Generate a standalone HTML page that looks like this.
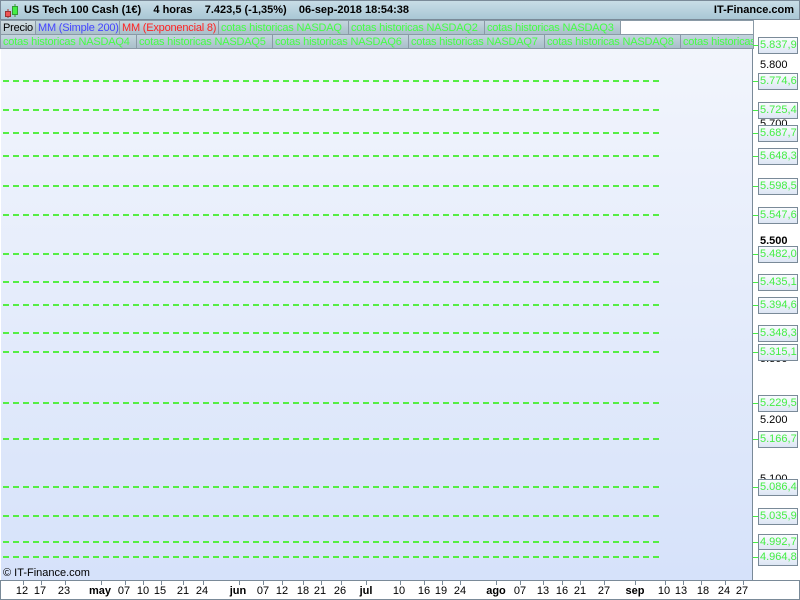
<!DOCTYPE html><html><head><style>
*{margin:0;padding:0;box-sizing:border-box}
body{width:800px;height:600px;overflow:hidden;background:#fff;font-family:"Liberation Sans",sans-serif;position:relative}
.hdr{position:absolute;left:0;top:0;width:800px;height:20px;background:linear-gradient(#c8dde6,#a9c7d5);border:1px solid #7a8a98;font-size:11px;font-weight:bold;line-height:19px}
.tab{position:absolute;height:15px;font-size:11px;letter-spacing:-0.2px;line-height:14px;padding-left:2px;border:1px solid #8a9aa6;background:linear-gradient(#c4d6de,#a9bfca);color:#44ff44;white-space:nowrap;overflow:hidden}
.plot{position:absolute;left:1px;top:49px;width:752px;height:531px;background:linear-gradient(#f2f5fc,#d6e2fa);border-right:1px solid #7a8a98}
.dl{position:absolute;left:2px;width:656px;height:2px;background:repeating-linear-gradient(90deg,#55ee44 0 6px,transparent 6px 10px)}
.lb{position:absolute;left:758px;width:40px;height:17px;border:1px solid #7a8a98;background:linear-gradient(#fafcff,#dde6f4);color:#44ee44;font-size:11px;line-height:15px;padding-left:1px;white-space:nowrap;overflow:hidden}
.tk{position:absolute;left:753px;width:5px;height:1px;background:#44ee44}
.ax{position:absolute;left:760px;font-size:11px;color:#000}
.bt{position:absolute;top:585px;font-size:11px;transform:translateX(-50%)}
.bt b{font-weight:bold}
.vt{position:absolute;top:580px;width:1px;height:5px;background:#7a8a98}
</style></head><body>
<div class="hdr"><svg style="position:absolute;left:3px;top:2px" width="16" height="16"><line x1="4" y1="6" x2="4" y2="15" stroke="#a33"/><rect x="1.5" y="8.5" width="5" height="5" fill="#e55" stroke="#933"/><line x1="11" y1="1" x2="11" y2="14" stroke="#393"/><rect x="8.5" y="3.5" width="5" height="8" fill="#4e4" stroke="#393"/></svg>
<span style="position:absolute;left:23px">US Tech 100 Cash (1€)&nbsp;&nbsp;&nbsp; 4 horas&nbsp;&nbsp;&nbsp; 7.423,5 (-1,35%)&nbsp;&nbsp;&nbsp; 06-sep-2018 18:54:38</span>
<span style="position:absolute;right:5px">IT-Finance.com</span></div>
<div class="tab" style="left:0;top:20px;width:36px;color:#000;background:linear-gradient(#d0dde2,#b8c8d0)">Precio</div>
<div class="tab" style="left:35px;top:20px;width:85px;color:#4444ff">MM (Simple 200)</div>
<div class="tab" style="left:119px;top:20px;width:100px;color:#ff2222">MM (Exponencial 8)</div>
<div class="tab" style="left:218px;top:20px;width:131px">cotas historicas NASDAQ</div>
<div class="tab" style="left:348px;top:20px;width:137px">cotas historicas NASDAQ2</div>
<div class="tab" style="left:484px;top:20px;width:137px">cotas historicas NASDAQ3</div>
<div style="position:absolute;left:620px;top:20px;width:134px;height:15px;border:1px solid #8a9aa6;background:#fff"></div>
<div class="tab" style="left:0;top:34px;width:137px">cotas historicas NASDAQ4</div>
<div class="tab" style="left:136px;top:34px;width:137px">cotas historicas NASDAQ5</div>
<div class="tab" style="left:272px;top:34px;width:137px">cotas historicas NASDAQ6</div>
<div class="tab" style="left:408px;top:34px;width:137px">cotas historicas NASDAQ7</div>
<div class="tab" style="left:544px;top:34px;width:137px">cotas historicas NASDAQ8</div>
<div class="tab" style="left:680px;top:34px;width:74px">cotas historicas NASDAQ9</div>
<div class="plot">
<div class="dl" style="top:31px"></div><div class="dl" style="top:60px"></div><div class="dl" style="top:83px"></div><div class="dl" style="top:106px"></div><div class="dl" style="top:136px"></div><div class="dl" style="top:165px"></div><div class="dl" style="top:204px"></div><div class="dl" style="top:232px"></div><div class="dl" style="top:255px"></div><div class="dl" style="top:283px"></div><div class="dl" style="top:302px"></div><div class="dl" style="top:353px"></div><div class="dl" style="top:389px"></div><div class="dl" style="top:437px"></div><div class="dl" style="top:466px"></div><div class="dl" style="top:492px"></div><div class="dl" style="top:507px"></div>
<div style="position:absolute;left:2px;top:518px;font-size:11px">© IT-Finance.com</div>
</div>
<div class="ax" style="top:59px">5.800</div><div class="ax" style="top:118px">5.700</div><div class="ax" style="top:235px;font-weight:bold">5.500</div><div class="ax" style="top:353px">5.300</div><div class="ax" style="top:414px">5.200</div><div class="ax" style="top:473px">5.100</div>
<div class="tk" style="top:45px"></div><div class="lb" style="top:37px">5.837,9</div>
<div class="tk" style="top:81px"></div><div class="lb" style="top:73px">5.774,6</div>
<div class="tk" style="top:110px"></div><div class="lb" style="top:102px">5.725,4</div>
<div class="tk" style="top:133px"></div><div class="lb" style="top:125px">5.687,7</div>
<div class="tk" style="top:156px"></div><div class="lb" style="top:148px">5.648,3</div>
<div class="tk" style="top:186px"></div><div class="lb" style="top:178px">5.598,5</div>
<div class="tk" style="top:215px"></div><div class="lb" style="top:207px">5.547,6</div>
<div class="tk" style="top:254px"></div><div class="lb" style="top:246px">5.482,0</div>
<div class="tk" style="top:282px"></div><div class="lb" style="top:274px">5.435,1</div>
<div class="tk" style="top:305px"></div><div class="lb" style="top:297px">5.394,6</div>
<div class="tk" style="top:333px"></div><div class="lb" style="top:325px">5.348,3</div>
<div class="tk" style="top:352px"></div><div class="lb" style="top:344px">5.315,1</div>
<div class="tk" style="top:403px"></div><div class="lb" style="top:395px">5.229,5</div>
<div class="tk" style="top:439px"></div><div class="lb" style="top:431px">5.166,7</div>
<div class="tk" style="top:487px"></div><div class="lb" style="top:479px">5.086,4</div>
<div class="tk" style="top:516px"></div><div class="lb" style="top:508px">5.035,9</div>
<div class="tk" style="top:542px"></div><div class="lb" style="top:534px">4.992,7</div>
<div class="tk" style="top:557px"></div><div class="lb" style="top:549px">4.964,8</div>
<div style="position:absolute;left:0;top:580px;width:800px;height:20px;border:1px solid #7a8a98"></div>
<div class="bt" style="left:22px">12</div><div class="bt" style="left:40px">17</div><div class="bt" style="left:64px">23</div><div class="bt" style="left:100px"><b>may</b></div><div class="bt" style="left:124px">07</div><div class="bt" style="left:143px">10</div><div class="bt" style="left:160px">15</div><div class="bt" style="left:183px">21</div><div class="bt" style="left:202px">24</div><div class="bt" style="left:238px"><b>jun</b></div><div class="bt" style="left:263px">07</div><div class="bt" style="left:282px">12</div><div class="bt" style="left:303px">18</div><div class="bt" style="left:320px">21</div><div class="bt" style="left:340px">26</div><div class="bt" style="left:366px"><b>jul</b></div><div class="bt" style="left:399px">10</div><div class="bt" style="left:424px">16</div><div class="bt" style="left:441px">19</div><div class="bt" style="left:460px">24</div><div class="bt" style="left:496px"><b>ago</b></div><div class="bt" style="left:520px">07</div><div class="bt" style="left:543px">13</div><div class="bt" style="left:562px">16</div><div class="bt" style="left:580px">21</div><div class="bt" style="left:604px">27</div><div class="bt" style="left:635px"><b>sep</b></div><div class="bt" style="left:664px">10</div><div class="bt" style="left:681px">13</div><div class="bt" style="left:703px">18</div><div class="bt" style="left:724px">24</div><div class="bt" style="left:742px">27</div>
<div class="vt" style="left:23px"></div><div class="vt" style="left:41px"></div><div class="vt" style="left:65px"></div><div class="vt" style="left:101px"></div><div class="vt" style="left:125px"></div><div class="vt" style="left:143px"></div><div class="vt" style="left:161px"></div><div class="vt" style="left:183px"></div><div class="vt" style="left:203px"></div><div class="vt" style="left:239px"></div><div class="vt" style="left:263px"></div><div class="vt" style="left:282px"></div><div class="vt" style="left:303px"></div><div class="vt" style="left:321px"></div><div class="vt" style="left:341px"></div><div class="vt" style="left:366px"></div><div class="vt" style="left:400px"></div><div class="vt" style="left:424px"></div><div class="vt" style="left:442px"></div><div class="vt" style="left:460px"></div><div class="vt" style="left:496px"></div><div class="vt" style="left:520px"></div><div class="vt" style="left:543px"></div><div class="vt" style="left:562px"></div><div class="vt" style="left:580px"></div><div class="vt" style="left:604px"></div><div class="vt" style="left:635px"></div><div class="vt" style="left:665px"></div><div class="vt" style="left:683px"></div><div class="vt" style="left:701px"></div><div class="vt" style="left:725px"></div><div class="vt" style="left:743px"></div>
</body></html>
